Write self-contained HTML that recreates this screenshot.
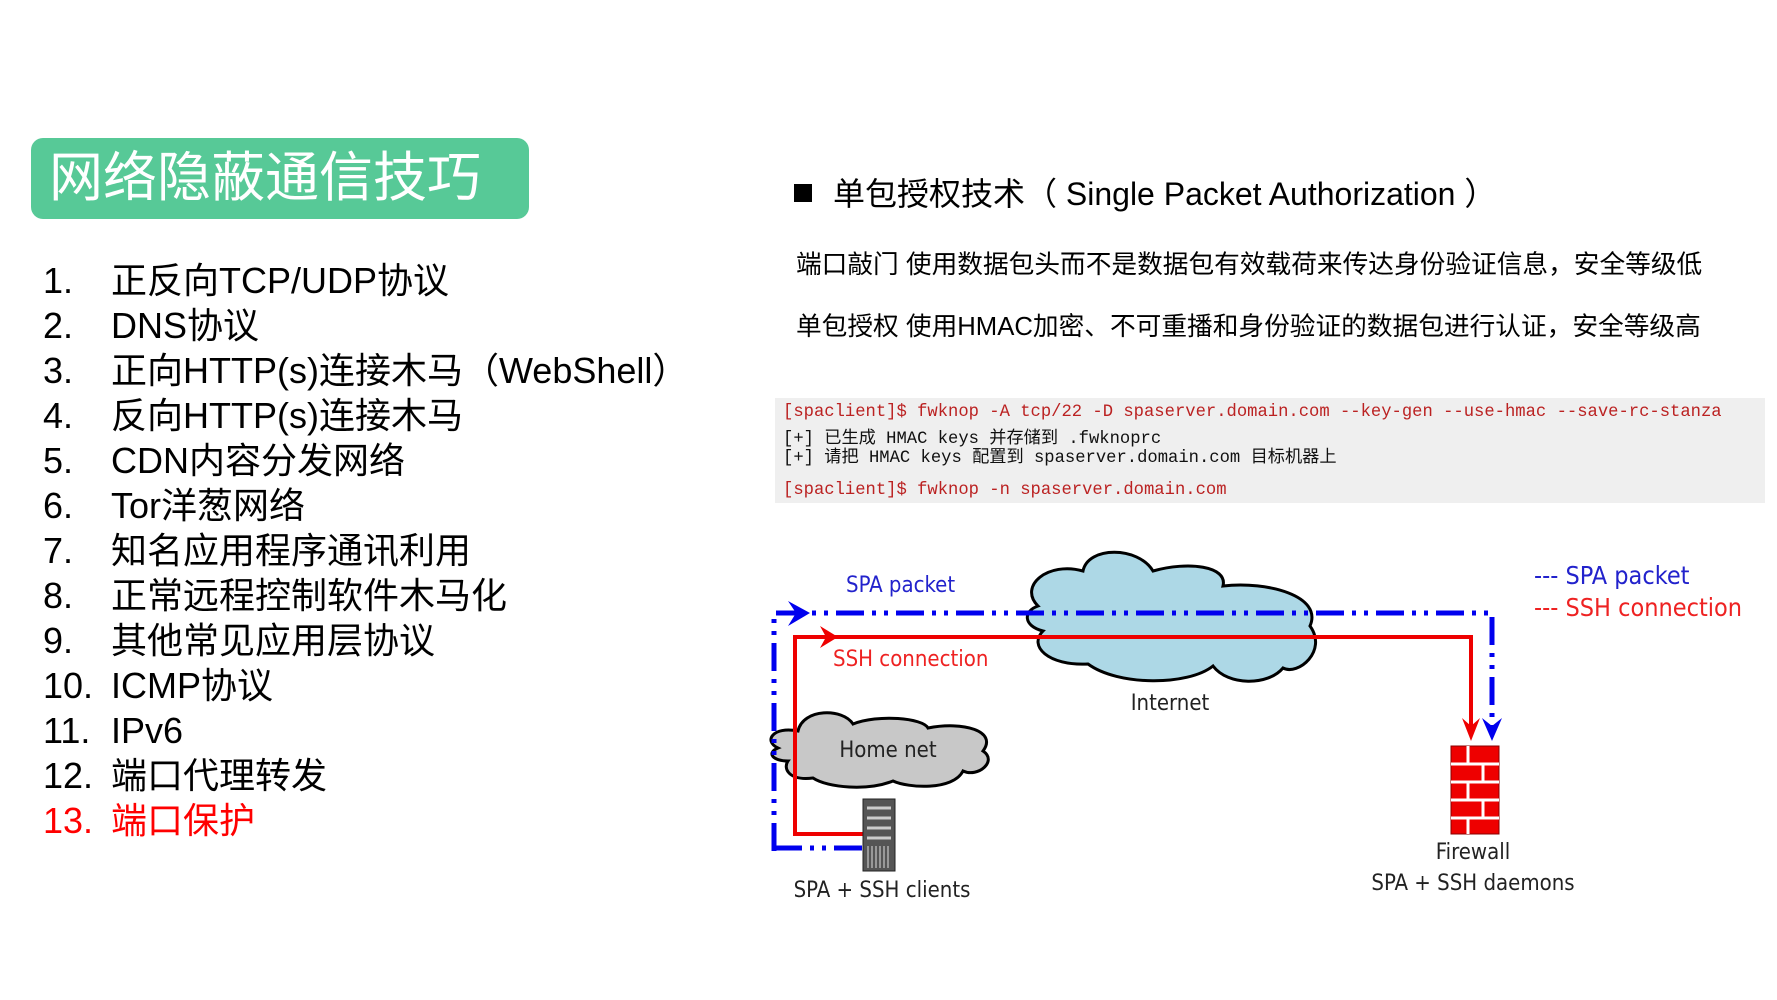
<!DOCTYPE html>
<html><head><meta charset="utf-8"><style>
body{margin:0;width:1777px;height:1000px;background:#fff;position:relative;overflow:hidden;font-family:"Liberation Sans","Noto Sans CJK SC",sans-serif}
.t{position:absolute;white-space:nowrap}
#title{position:absolute;left:31px;top:138px;width:498px;height:81px;background:#57c997;border-radius:12px}
#title span{position:absolute;left:18px;top:8px;color:#fff;font-size:54px;line-height:64px;white-space:nowrap}
.li{position:absolute;left:43px;font-size:36px;line-height:44px;color:#000;white-space:nowrap}
.li b{font-weight:normal;position:absolute;left:68px;white-space:nowrap}
.code{position:absolute;left:775px;top:398px;width:990px;height:105px;background:#efefef}
.code div{position:absolute;left:8px;font-family:"Liberation Mono","Noto Sans CJK SC",monospace;font-size:17.2px;white-space:nowrap}
</style></head><body>
<div id="title"><span>网络隐蔽通信技巧</span></div>
<div class="li" style="top:259px">1.<b>正反向TCP/UDP协议</b></div>
<div class="li" style="top:304px">2.<b>DNS协议</b></div>
<div class="li" style="top:349px">3.<b>正向HTTP(s)连接木马（WebShell）</b></div>
<div class="li" style="top:394px">4.<b>反向HTTP(s)连接木马</b></div>
<div class="li" style="top:439px">5.<b>CDN内容分发网络</b></div>
<div class="li" style="top:484px">6.<b>Tor洋葱网络</b></div>
<div class="li" style="top:529px">7.<b>知名应用程序通讯利用</b></div>
<div class="li" style="top:574px">8.<b>正常远程控制软件木马化</b></div>
<div class="li" style="top:619px">9.<b>其他常见应用层协议</b></div>
<div class="li" style="top:664px">10.<b>ICMP协议</b></div>
<div class="li" style="top:709px">11.<b>IPv6</b></div>
<div class="li" style="top:754px">12.<b>端口代理转发</b></div>
<div class="li" style="top:799px;color:#f00">13.<b>端口保护</b></div>

<div style="position:absolute;left:794px;top:184px;width:18px;height:18px;background:#000"></div>
<div class="t" style="left:833px;top:174px;font-size:32px;line-height:40px">单包授权技术（ Single Packet Authorization ）</div>
<div class="t" style="left:796px;top:250px;font-size:25.7px;line-height:30px">端口敲门 使用数据包头而不是数据包有效载荷来传达身份验证信息，安全等级低</div>
<div class="t" style="left:796px;top:312px;font-size:25.7px;line-height:30px">单包授权 使用HMAC加密、不可重播和身份验证的数据包进行认证，安全等级高</div>

<div class="code">
<div style="top:5px;color:#b22">[spaclient]$ fwknop -A tcp/22 -D spaserver.domain.com --key-gen --use-hmac --save-rc-stanza</div>
<div style="top:25px;color:#111">[+] 已生成 HMAC keys 并存储到 .fwknoprc</div>
<div style="top:44px;color:#111">[+] 请把 HMAC keys 配置到 spaserver.domain.com 目标机器上</div>
<div style="top:83px;color:#b22">[spaclient]$ fwknop -n spaserver.domain.com</div>
</div>

<svg width="1777" height="1000" style="position:absolute;left:0;top:0" font-family="DejaVu Sans Condensed, DejaVu Sans, sans-serif">
<g transform="translate(-12,-4)">
<path d="M1050 610 C1030 590 1060 565 1095 575 C1100 550 1150 550 1165 575 C1200 565 1240 570 1235 590 C1280 585 1335 600 1322 630 C1340 655 1310 680 1295 672 C1280 690 1240 690 1225 670 C1200 690 1130 690 1100 668 C1060 670 1040 650 1055 635 C1035 630 1035 615 1050 610Z" fill="#add8e6" stroke="#000" stroke-width="3"/>
<path d="M790 752 C775 745 785 730 810 735 C815 712 855 712 865 728 C890 718 935 722 940 732 C975 725 1010 735 995 755 C1010 765 990 782 975 775 C965 795 920 792 905 785 C880 795 840 792 825 782 C800 785 795 772 800 765 C785 765 778 757 790 752Z" fill="#c8c8c8" stroke="#000" stroke-width="3"/>
<g stroke="#00e" stroke-width="5" fill="none" stroke-dasharray="28 8 4 8 4 8">
<path d="M786 855 V617 H1504 V735"/>
<path d="M786 852 H875"/>
</g>
<path d="M800 605 L822 617 L800 630 L808 617Z" fill="#00e"/>
<path d="M1494 722 L1504 745 L1514 722 L1504 730Z" fill="#00e"/>
<g stroke="#e00" stroke-width="4" fill="none">
<path d="M891 838 H807 V641 H1483 V735"/>
</g>
<path d="M832 630 L850 641 L832 652 L838 641Z" fill="#e00"/>
<path d="M1474 722 L1483 745 L1492 722 L1483 730Z" fill="#e00"/>
<rect x="1463" y="750" width="48" height="88" fill="#e00" stroke="#800"/>
<g stroke="#fff" stroke-width="3"><path d="M1463 768H1511M1463 786H1511M1463 804H1511M1463 822H1511M1480 750V768M1495 768V786M1480 786V804M1495 804V822M1480 822V838"/></g>
<rect x="875" y="803" width="32" height="72" fill="#555" stroke="#222"/>
<g stroke="#ccc" stroke-width="3"><path d="M879 812H903M879 822H903M879 832H903M879 842H903"/></g>
<g stroke="#ddd" stroke-width="1"><path d="M880 850V872M884 850V872M888 850V872M892 850V872M896 850V872M900 850V872"/></g>
<text x="858" y="596" fill="#22c" font-size="22">SPA packet</text>
<text x="845" y="670" fill="#e22" font-size="22">SSH connection</text>
<text x="1182" y="714" fill="#222" font-size="22" text-anchor="middle">Internet</text>
<text x="900" y="761" fill="#222" font-size="22" text-anchor="middle">Home net</text>
<text x="894" y="901" fill="#222" font-size="22" text-anchor="middle">SPA + SSH clients</text>
<text x="1485" y="863" fill="#222" font-size="22" text-anchor="middle">Firewall</text>
<text x="1485" y="894" fill="#222" font-size="22" text-anchor="middle">SPA + SSH daemons</text>
<text x="1546" y="588" fill="#22c" font-size="25">--- SPA packet</text>
<text x="1546" y="620" fill="#e22" font-size="25">--- SSH connection</text>
</g>
</svg>
</body></html>
